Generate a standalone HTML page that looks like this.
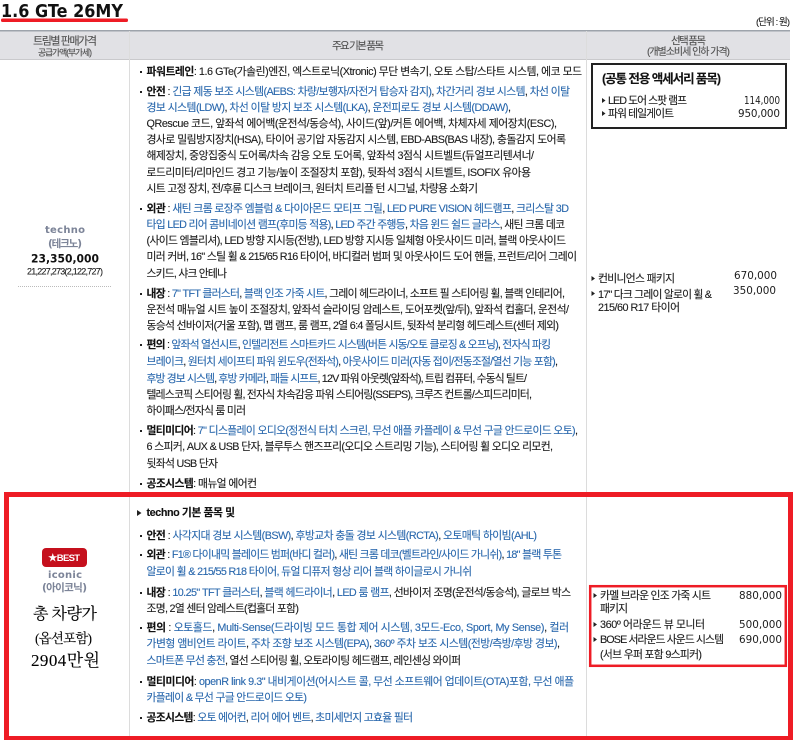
<!DOCTYPE html>
<html lang="ko"><head><meta charset="utf-8"><title>1.6 GTe 26MY</title>
<style>
html,body{margin:0;padding:0;background:#fff;width:793px;height:740px;overflow:hidden}
svg{display:block}
text{font-family:"Liberation Sans","Noto Sans CJK KR",sans-serif;font-size:10.8px;fill:#1c1c1c;stroke:#1c1c1c;stroke-width:.12px;filter:blur(.25px)}
.b{fill:#2a68ad;stroke:#2a68ad}
.l{font-weight:700;fill:#111;stroke:#111}
.h{fill:#505050;stroke:#505050}
.g{font-family:"DejaVu Sans","Noto Sans CJK KR",sans-serif;font-weight:700;fill:#7c8498;stroke:none}
.p{font-family:"DejaVu Sans",sans-serif;font-size:10.4px;stroke:none}
.s{font-family:"Liberation Serif","Noto Serif CJK SC","Noto Serif CJK KR",serif;fill:#000;stroke:#000;stroke-width:.1px}
</style></head><body>
<svg width="793" height="740" viewBox="0 0 793 740" xmlns="http://www.w3.org/2000/svg">
<text x="1" y="17" textLength="122" lengthAdjust="spacingAndGlyphs" style="font-family:'DejaVu Sans',sans-serif;font-size:17.500px;font-weight:700;fill:#111;stroke:none">1.6 GTe 26MY</text>
<rect x="1" y="18.500" width="127" height="3.500" rx="1.500" fill="#ee1c25"/>
<text x="756" y="25" textLength="34" style="font-size:9.500px">(단위 : 원)</text>
<rect x="0" y="31" width="790" height="28.500" fill="#e1e1e5"/>
<rect x="0" y="30" width="790" height="1.500" fill="#9da3ab"/>
<rect x="0" y="59" width="790" height="1" fill="#c9c9cc"/>
<rect x="129" y="31" width="1" height="705" fill="#dcdcdc"/>
<rect x="586" y="31" width="1" height="705" fill="#dcdcdc"/>
<text x="33" y="44.500" textLength="64" class="h" style="font-size:11px">트림별 판매가격</text>
<text x="38" y="55.500" textLength="54" class="h" style="font-size:8.800px">공급가액(부가세)</text>
<text x="332" y="49" textLength="52" class="h" style="font-size:10.500px">주요 기본 품목</text>
<text x="671" y="44" textLength="35" class="h" style="font-size:10.500px">선택 품목</text>
<text x="647" y="55" textLength="83" class="h" style="font-size:10px">(개별소비세 인하 가격)</text>

<text x="45" y="233" textLength="40" class="g" style="font-size:10px">techno</text>
<text x="48" y="247" textLength="34" class="g" style="font-size:10.500px">(테크노)</text>
<text x="31" y="262.500" textLength="68" lengthAdjust="spacingAndGlyphs" style="font-family:'DejaVu Sans',sans-serif;font-size:11.500px;font-weight:700;fill:#111;stroke:none">23,350,000</text>
<text x="27" y="274.500" textLength="76" style="font-size:9px">21,227,273(2,122,727)</text>
<line x1="18" y1="286.500" x2="112" y2="286.500" stroke="#bbb" stroke-width="1" stroke-dasharray="1 1"/>

<g fill="#222">
<rect x="140" y="71" width="2" height="2"/><rect x="140" y="91" width="2" height="2"/><rect x="140" y="208" width="2" height="2"/><rect x="140" y="293" width="2" height="2"/><rect x="140" y="344" width="2" height="2"/><rect x="140" y="430" width="2" height="2"/><rect x="140" y="483" width="2" height="2"/>
<rect x="140" y="535" width="2" height="2"/><rect x="140" y="554" width="2" height="2"/><rect x="140" y="592" width="2" height="2"/><rect x="140" y="627" width="2" height="2"/><rect x="140" y="681" width="2" height="2"/><rect x="140" y="717" width="2" height="2"/>
<path d="M137 510L141.500 513L137 516Z"/>
</g>

<text x="146.500" y="75" textLength="435.500"><tspan class="l">파워트레인</tspan>: 1.6 GTe(가솔린)엔진, 엑스트로닉(Xtronic) 무단 변속기, 오토 스탑/스타트 시스템, 에코 모드</text>
<text x="146.500" y="95" textLength="423.500"><tspan class="l">안전</tspan> : <tspan class="b">긴급 제동 보조 시스템(AEBS: 차량/보행자/자전거 탑승자 감지)</tspan>, <tspan class="b">차간거리 경보 시스템</tspan>, <tspan class="b">차선 이탈</tspan></text>
<text x="146.500" y="111" textLength="364.500"><tspan class="b">경보 시스템(LDW)</tspan>, <tspan class="b">차선 이탈 방지 보조 시스템(LKA)</tspan>, <tspan class="b">운전피로도 경보 시스템(DDAW)</tspan>,</text>
<text x="146.500" y="127" textLength="410.500">QRescue 코드, 앞좌석 에어백(운전석/동승석), 사이드(앞)/커튼 에어백, 차체자세 제어장치(ESC),</text>
<text x="146.500" y="143" textLength="419.500">경사로 밀림방지장치(HSA), 타이어 공기압 자동감지 시스템, EBD-ABS(BAS 내장), 충돌감지 도어록</text>
<text x="146.500" y="159" textLength="387.500">해제장치, 중앙집중식 도어록/차속 감응 오토 도어록, 앞좌석 3점식 시트벨트(듀얼프리텐셔너/</text>
<text x="146.500" y="176" textLength="384.500">로드리미터/리마인드 경고 기능/높이 조절장치 포함), 뒷좌석 3점식 시트벨트, ISOFIX 유아용</text>
<text x="146.500" y="192" textLength="331.500">시트 고정 장치, 전/후륜 디스크 브레이크, 원터치 트리플 턴 시그널, 차량용 소화기</text>

<text x="146.500" y="212" textLength="422.500"><tspan class="l">외관</tspan> : <tspan class="b">새틴 크롬 로장주 엠블럼 &amp; 다이아몬드 모티프 그릴</tspan>, <tspan class="b">LED PURE VISION 헤드램프</tspan>, <tspan class="b">크리스탈 3D</tspan></text>
<text x="146.500" y="228" textLength="418.500"><tspan class="b">타입 LED 리어 콤비네이션 램프(후미등 적용)</tspan>, <tspan class="b">LED 주간 주행등</tspan>, <tspan class="b">차음 윈드 쉴드 글라스</tspan>, 새틴 크롬 데코</text>
<text x="146.500" y="244" textLength="419.500">(사이드 엠블리셔), LED 방향 지시등(전방), LED 방향 지시등 일체형 아웃사이드 미러, 블랙 아웃사이드</text>
<text x="146.500" y="260" textLength="430.500">미러 커버, 16" 스틸 휠 &amp; 215/65 R16 타이어, 바디컬러 범퍼 및 아웃사이드 도어 핸들, 프런트/리어 그레이</text>
<text x="146.500" y="277" textLength="80.500">스키드, 샤크 안테나</text>

<text x="146.500" y="297" textLength="418.500"><tspan class="l">내장</tspan> : <tspan class="b">7" TFT 클러스터</tspan>, <tspan class="b">블랙 인조 가죽 시트</tspan>, 그레이 헤드라이너, 소프트 필 스티어링 휠, 블랙 인테리어,</text>
<text x="146.500" y="313" textLength="422.500">운전석 매뉴얼 시트 높이 조절장치, 앞좌석 슬라이딩 암레스트, 도어포켓(앞/뒤), 앞좌석 컵홀더, 운전석/</text>
<text x="146.500" y="329" textLength="412.500">동승석 선바이저(거울 포함), 맵 램프, 룸 램프, 2열 6:4 폴딩시트, 뒷좌석 분리형 헤드레스트(센터 제외)</text>

<text x="146.500" y="348" textLength="404.500"><tspan class="l">편의</tspan> : <tspan class="b">앞좌석 열선시트</tspan>, <tspan class="b">인텔리전트 스마트카드 시스템(버튼 시동/오토 클로징 &amp; 오프닝)</tspan>, <tspan class="b">전자식 파킹</tspan></text>
<text x="146.500" y="365" textLength="411.500"><tspan class="b">브레이크</tspan>, <tspan class="b">원터치 세이프티 파워 윈도우(전좌석)</tspan>, <tspan class="b">아웃사이드 미러(자동 접이/전동조절/열선 기능 포함)</tspan>,</text>
<text x="146.500" y="382" textLength="380.500"><tspan class="b">후방 경보 시스템</tspan>, <tspan class="b">후방 카메라</tspan>, <tspan class="b">패들 시프트</tspan>, 12V 파워 아웃렛(앞좌석), 트립 컴퓨터, 수동식 틸트/</text>
<text x="146.500" y="398" textLength="385.500">텔레스코픽 스티어링 휠, 전자식 차속감응 파워 스티어링(SSEPS), 크루즈 컨트롤/스피드리미터,</text>
<text x="146.500" y="414" textLength="99.500">하이패스/전자식 룸 미러</text>

<text x="146.500" y="434" textLength="431.500"><tspan class="l">멀티미디어</tspan>: <tspan class="b">7" 디스플레이 오디오(정전식 터치 스크린, 무선 애플 카플레이 &amp; 무선 구글 안드로이드 오토)</tspan>,</text>
<text x="146.500" y="450" textLength="406.500">6 스피커, AUX &amp; USB 단자, 블루투스 핸즈프리(오디오 스트리밍 기능), 스티어링 휠 오디오 리모컨,</text>
<text x="146.500" y="467" textLength="71.500">뒷좌석 USB 단자</text>
<text x="146.500" y="487" textLength="110.500"><tspan class="l">공조시스템</tspan>: 매뉴얼 에어컨</text>

<text x="146.500" y="516" textLength="88.500" class="l">techno 기본 품목 및</text>
<text x="146.500" y="539" textLength="390.500"><tspan class="l">안전</tspan> : <tspan class="b">사각지대 경보 시스템(BSW)</tspan>, <tspan class="b">후방교차 충돌 경보 시스템(RCTA)</tspan>, <tspan class="b">오토매틱 하이빔(AHL)</tspan></text>
<text x="146.500" y="558" textLength="415.500"><tspan class="l">외관</tspan> : <tspan class="b">F1® 다이내믹 블레이드 범퍼(바디 컬러)</tspan>, <tspan class="b">새틴 크롬 데코(벨트라인/사이드 가니쉬)</tspan>, <tspan class="b">18" 블랙 투톤</tspan></text>
<text x="146.500" y="575" textLength="325.500" class="b">알로이 휠 &amp; 215/55 R18 타이어, 듀얼 디퓨저 형상 리어 블랙 하이글로시 가니쉬</text>
<text x="146.500" y="596" textLength="424.500"><tspan class="l">내장</tspan> : <tspan class="b">10.25" TFT 클러스터</tspan>, <tspan class="b">블랙 헤드라이너</tspan>, <tspan class="b">LED 룸 램프</tspan>, 선바이저 조명(운전석/동승석), 글로브 박스</text>
<text x="146.500" y="612" textLength="152.500">조명, 2열 센터 암레스트(컵홀더 포함)</text>
<text x="146.500" y="631" textLength="422.500"><tspan class="l">편의</tspan> : <tspan class="b">오토홀드</tspan>, <tspan class="b">Multi-Sense(드라이빙 모드 통합 제어 시스템, 3모드-Eco, Sport, My Sense)</tspan>, <tspan class="b">컬러</tspan></text>
<text x="146.500" y="647" textLength="413.500"><tspan class="b">가변형 앰비언트 라이트</tspan>, <tspan class="b">주차 조향 보조 시스템(EPA)</tspan>, <tspan class="b">360º 주차 보조 시스템(전방/측방/후방 경보)</tspan>,</text>
<text x="146.500" y="664" textLength="314.500"><tspan class="b">스마트폰 무선 충전</tspan>, 열선 스티어링 휠, 오토라이팅 헤드램프, 레인센싱 와이퍼</text>
<text x="146.500" y="685" textLength="427.500"><tspan class="l">멀티미디어</tspan>: <tspan class="b">openR link 9.3" 내비게이션(어시스트 콜, 무선 소프트웨어 업데이트(OTA)포함, 무선 애플</tspan></text>
<text x="146.500" y="701" textLength="160.500" class="b">카플레이 &amp; 무선 구글 안드로이드 오토)</text>
<text x="146.500" y="721" textLength="266.500"><tspan class="l">공조시스템</tspan>: <tspan class="b">오토 에어컨</tspan>, <tspan class="b">리어 에어 벤트</tspan>, <tspan class="b">초미세먼지 고효율 필터</tspan></text>

<rect x="592" y="64" width="194" height="64" fill="none" stroke="#222" stroke-width="2"/>
<text x="602" y="83" textLength="119" style="font-size:12.500px;font-weight:700;fill:#111">(공통 전용 액세서리 품목)</text>
<g fill="#222">
<path d="M602 98L605.500 100.500L602 103Z"/><path d="M602 111L605.500 113.500L602 116Z"/>
<path d="M591.500 276L595 278.500L591.500 281Z"/><path d="M591.500 291L595 293.500L591.500 296Z"/>
<path d="M593.500 593L597 595.500L593.500 598Z"/><path d="M593.500 622L597 624.500L593.500 627Z"/><path d="M593.500 637L597 639.500L593.500 642Z"/>
</g>
<text x="608" y="104" textLength="79">LED 도어 스팟 램프</text>
<text x="744" y="104" textLength="36" lengthAdjust="spacingAndGlyphs" class="p">114,000</text>
<text x="608" y="117" textLength="66">파워 테일게이트</text>
<text x="738" y="117" textLength="42" class="p">950,000</text>
<text x="598" y="282" textLength="77">컨비니언스 패키지</text>
<text x="734" y="279" textLength="43" class="p">670,000</text>
<text x="598" y="298" textLength="114">17" 다크 그레이 알로이 휠 &amp;</text>
<text x="733" y="294" textLength="43" class="p">350,000</text>
<text x="598" y="311" textLength="82">215/60 R17 타이어</text>

<text x="600" y="599" textLength="111">카멜 브라운 인조 가죽 시트</text>
<text x="739" y="599" textLength="43" class="p">880,000</text>
<text x="600" y="612" textLength="28">패키지</text>
<text x="600" y="628" textLength="105">360º 어라운드 뷰 모니터</text>
<text x="739" y="628" textLength="43" class="p">500,000</text>
<text x="600" y="643" textLength="124">BOSE 서라운드 사운드 시스템</text>
<text x="739" y="643" textLength="43" class="p">690,000</text>
<text x="600" y="658" textLength="102">(서브 우퍼 포함 9스피커)</text>

<rect x="42" y="548" width="45" height="19" rx="4" fill="#c5101d"/>
<text x="48" y="561" textLength="32" style="font-size:9.500px;font-weight:700;fill:#fff;stroke:none">★BEST</text>
<text x="48" y="578" textLength="34" class="g" style="font-size:10px">iconic</text>
<text x="42" y="591" textLength="45" class="g" style="font-size:10.500px">(아이코닉)</text>
<text x="33" y="619" textLength="64" class="s" style="font-size:16px">총 차량가</text>
<text x="35" y="643" textLength="57" class="s" style="font-size:13.500px">(옵션포함)</text>
<text x="31" y="666" textLength="69" class="s" style="font-size:17px">2904만원</text>

<rect x="590.200" y="586.200" width="195.600" height="79.600" fill="none" stroke="#ee1c25" stroke-width="2.500"/>
<path fill-rule="evenodd" fill="#ee1c25" d="M4 492H793V740H4ZM9 497V736H788V497Z"/>
</svg>
</body></html>
